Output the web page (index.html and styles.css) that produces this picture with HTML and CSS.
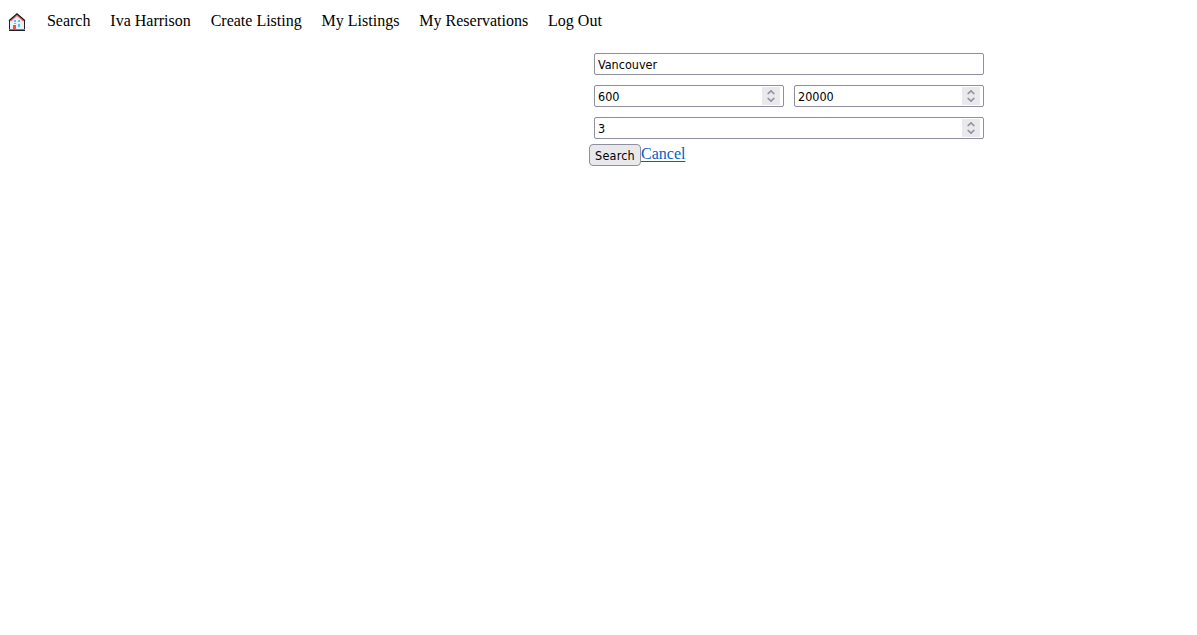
FILE: index.html
```html
<!DOCTYPE html>
<html lang="en">
<head>
<meta charset="utf-8">
<title>Search</title>
<link rel="stylesheet" href="styles.css">
</head>
<body>
<nav class="nav">
  <a class="home" href="#" aria-label="Home">
    <svg width="18" height="20" viewBox="0 0 18 20">
      <path d="M2 8.500 9 2.500l7 6V18H2z" fill="#eeedf8"/>
      <path d="M1.500 8.500V18M16.500 8.500V18" stroke="#222"/>
      <path d="M2.500 9 9 3.200 15.500 9" fill="none" stroke="#f4665c" stroke-width="1.300"/>
      <path d="M1 8.700 9 1.800l8 6.900" fill="none" stroke="#111" stroke-width="1.200"/>
      <path d="M6 8h2v2H6zM10 8h2v2h-2zM6 11h2v1H6zM10 12h2v3h-2z" fill="#45c8f8"/>
      <path d="M5 13h3v4H5z" fill="#f0503c"/>
      <path d="M1 17.500h16" stroke="#3da34a"/>
      <path d="M1 18.500h16" stroke="#222"/>
    </svg>
  </a>
  <a href="#">Search</a>
  <a href="#">Iva Harrison</a>
  <a href="#">Create Listing</a>
  <a href="#">My Listings</a>
  <a href="#">My Reservations</a>
  <a href="#">Log Out</a>
</nav>
<form class="search">
  <div class="fields">
    <div class="field wide"><input type="text" value="Vancouver"></div>
    <div class="field"><input type="text" value="600"><span class="spin"><svg width="18" height="18" viewBox="0 0 18 18"><path d="M5.700 7 9 3.900 12.300 7M5.700 11l3.300 3.100 3.300-3.100"/></svg></span></div>
    <div class="field"><input type="text" value="20000"><span class="spin"><svg width="18" height="18" viewBox="0 0 18 18"><path d="M5.700 7 9 3.900 12.300 7M5.700 11l3.300 3.100 3.300-3.100"/></svg></span></div>
    <div class="field wide"><input type="text" value="3"><span class="spin"><svg width="18" height="18" viewBox="0 0 18 18"><path d="M5.700 7 9 3.900 12.300 7M5.700 11l3.300 3.100 3.300-3.100"/></svg></span></div>
  </div>
  <div class="actions"><button class="submit" type="button">Search</button><a class="cancel" href="#">Cancel</a></div>
</form>
</body>
</html>
```
FILE: styles.css
```css
* { box-sizing: border-box; }
body {
  margin: 0;
  background: #fff;
  color: #000;
  font: 16px/18px "Liberation Serif", "Times New Roman", serif;
}
.nav {
  display: flex;
  gap: 19.9px;
  height: 48px;
  padding: 12px 8px 0;
  white-space: nowrap;
}
.nav a { color: #000; text-decoration: none; }
.nav .home { width: 19px; height: 20px; }
.home svg { display: block; }
.search { width: 400px; margin-left: 589px; }
.fields {
  display: grid;
  grid-template-columns: 1fr 1fr;
  gap: 10px;
  padding: 5px;
}
.field {
  display: flex;
  height: 22px;
  padding: 1px 3px;
  border: 1px solid #8f8f9d;
  border-radius: 2px;
  background: #fff;
}
.wide { grid-column: 1 / -1; }
.field input {
  flex: 1;
  min-width: 0;
  padding: 1px 0 0;
  border: 0;
  outline: 0;
  background: none;
  color: #000;
  font: 12.5px/17px "DejaVu Sans Condensed", "DejaVu Sans", sans-serif;
}
.spin { width: 18px; height: 18px; background: #e9e9ed; }
.spin svg { display: block; }
.spin path { fill: none; stroke: #8f8f9d; stroke-width: 1.6; }
.actions { display: flex; height: 22px; }
.submit {
  width: 52px;
  height: 22px;
  padding: 1px 0 0;
  border: 1px solid #8f8f9d;
  border-radius: 4px;
  background: #e9e9ed;
  color: #000;
  font: 12.5px/17px "DejaVu Sans Condensed", "DejaVu Sans", sans-serif;
  letter-spacing: 0.2px;
}
.cancel {
  padding-top: 1px;
  color: #0061cc;
  text-decoration-thickness: 1px;
  text-underline-offset: 2px;
}
```
